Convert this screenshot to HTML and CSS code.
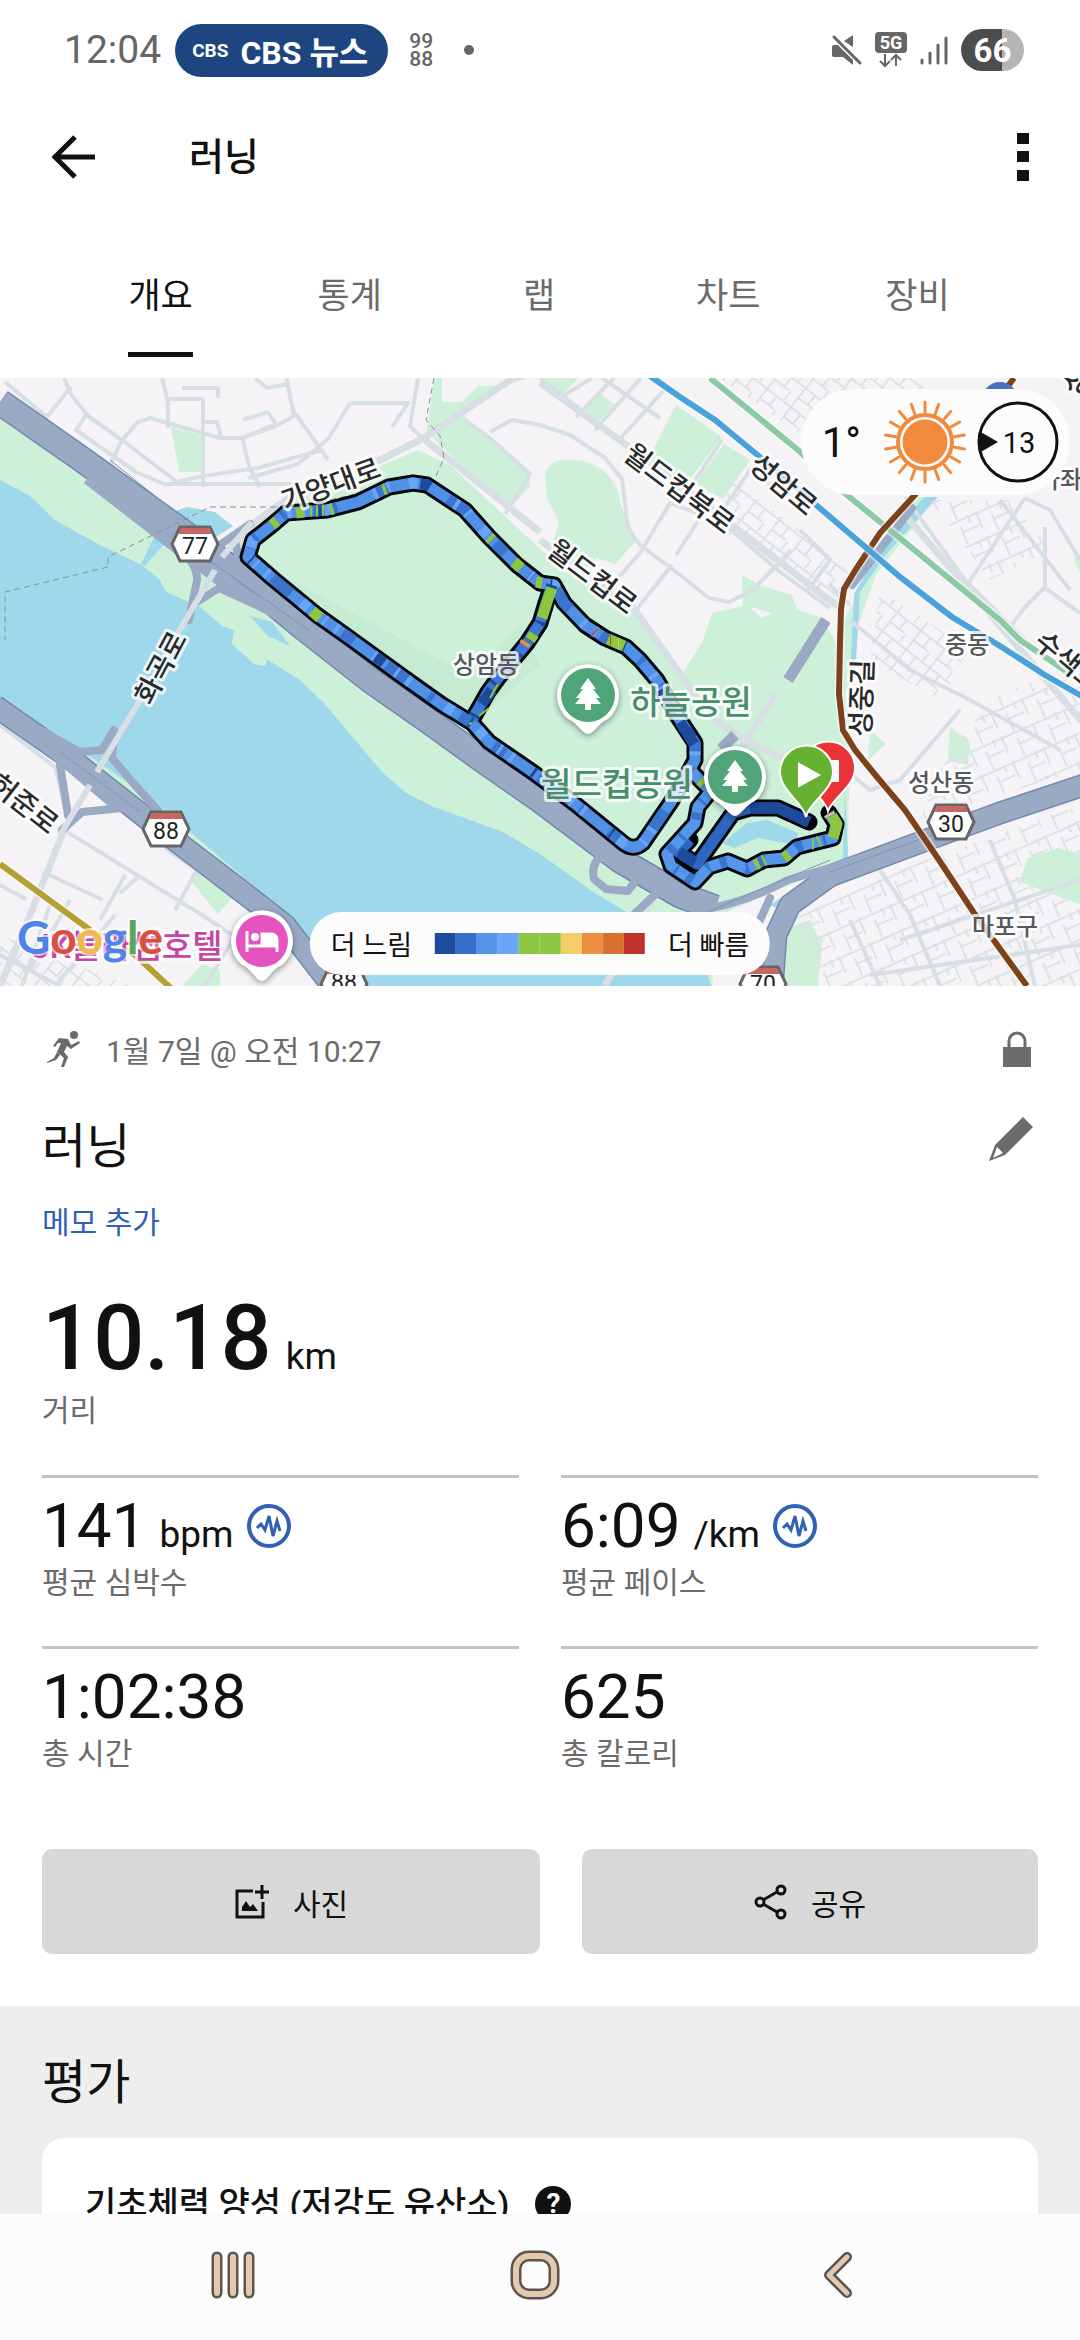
FILE: index.html
```html
<!DOCTYPE html>
<html lang="ko">
<head>
    <meta charset="UTF-8">
    <meta name="viewport" content="width=device-width, initial-scale=1.0">
    <title>러닝</title>
    <link rel="stylesheet" href="styles.css">
</head>
<body>
<div class="screen">
    <div class="status-bar">
        <span class="clock">12:04</span>
        <span class="news-pill"><small>CBS</small> CBS 뉴스</span>
        <span class="steps">99<br>88</span>
        <span class="dot"></span>
        <div class="status-icons">
            <svg width="32" height="34" viewBox="0 0 32 34" fill="#666">
                <path d="M22 2v12L13 8zM1 14q0-2 2-2h5l14 14v6l-10-8H3q-2 0-2-2z"/>
                <path d="M3 4l26 26" stroke="#fff" stroke-width="6"/>
                <path d="M3 4l26 26" stroke="#666" stroke-width="3" stroke-linecap="round"/>
            </svg>
            <svg width="32" height="36" viewBox="0 0 32 36">
                <rect width="32" height="21" rx="4" fill="#666"/>
                <text x="16" y="17" class="net-text">5G</text>
                <path d="M10 22v12m-5-5l5 5 5-5M21 34V23m-5 5l5-5 5 5" fill="none" stroke="#666" stroke-width="2"/>
            </svg>
            <svg width="30" height="32" viewBox="0 0 30 32" stroke="#666" stroke-width="3" stroke-linecap="round">
                <path d="M3 26v3M11 19v10M19 11v18M27 4v25"/>
            </svg>
            <span class="battery">66</span>
        </div>
    </div>

    <header class="app-bar">
        <button class="icon-button back" aria-label="뒤로">
            <svg width="44" height="44" viewBox="0 0 44 44" fill="none" stroke="#111" stroke-width="5"><path d="M24 2L4 22l20 20M4 22h40"/></svg>
        </button>
        <h1>러닝</h1>
        <button class="icon-button" aria-label="더보기">
            <svg width="12" height="48" viewBox="0 0 12 48" fill="#111"><path d="M0 0h12v11H0zM0 18h12v11H0zM0 37h12v11H0z"/></svg>
        </button>
    </header>

    <nav class="tabs">
        <a href="#" class="active"><span>개요</span></a>
        <a href="#"><span>통계</span></a>
        <a href="#"><span>랩</span></a>
        <a href="#"><span>차트</span></a>
        <a href="#"><span>장비</span></a>
    </nav>

    <main>
        <div class="map">
            <svg class="map-canvas" viewBox="0 378 1080 608">
                <defs>
                    <pattern id="streets" width="34" height="27" patternUnits="userSpaceOnUse" patternTransform="rotate(-24)">
                        <path d="M0 2h34M3 0v18M17 8v19M17 14h17M28 0v8" class="lane"/>
                    </pattern>
                    <pattern id="alleys" width="30" height="24" patternUnits="userSpaceOnUse" patternTransform="rotate(38)">
                        <path d="M0 2h30M4 0v24M16 2v12M4 14h18M24 14v10" class="lane"/>
                    </pattern>
                    <g id="shield">
                        <path d="M-15-17h30l8 17-8 17h-30l-8-17z" fill="#fff" stroke="#666" stroke-width="3"/>
                        <path d="M-14-16h28l3 6h-34z" fill="#c96663"/>
                    </g>
                    <g id="pin">
                        <path d="M0 39C-6 39-9 29-20 24A31 31 0 1 1 20 24C9 29 6 39 0 39z" fill="#fff" class="pin-body"/>
                        <circle r="27" fill="#4fa577"/>
                        <path d="M0-17l8 11H5l7 9H8l5 6H3v6h-6v-6h-10l5-6h-4l7-9h-3z" fill="#fff"/>
                    </g>
                    <path id="loop" d="M472 723L441 704 403 677 348 637 317 615 272 578 248 557 253 540 272 525 286 513 327 510 358 502 389 487 413 483 427 485 465 510 489 537 517 565 540 583 554 585 564 603 585 625 605 638 626 647 640 660 657 680 678 717 695 743 695 760 688 773 671 802 643 843Q633 852 622 842L574 803 534 773 489 742z"/>
                    <path id="link" d="M552 585L546 603 540 623 527 643 499 677 488 692 472 720"/>
                    <path id="east" d="M690 770L711 791 698 807 695 823 667 854 671 866 695 882 709 867 728 861 747 869 764 860 784 858 797 847 833 838 836 824 829 813"/>
                    <path id="start" d="M809 822L778 808 750 808 733 813 697 864 678 852 690 840"/>
                </defs>

                <rect y="378" width="1080" height="608" fill="#f5f3f5"/>

                <!-- parks -->
                <g class="park">
                    <path d="M0 408L110 485 180 535 235 555 255 520 290 500 390 462 418 450 450 465 552 560 600 590 640 615 665 655 683 672 702 643 712 613 747 605 762 618 788 607 820 617 835 640 850 720 848 860 720 915 712 986 330 986 280 910 180 842 0 720z"/>
                    <path d="M171 427l30 8v37h-22zM434 378h8v24h20l16-16h20l-72 50zM427 432l30-22 73 62v14l-22 24z"/>
                    <path d="M540 378h38l-16 17zM600 393l15 12-16 16-15-12zM676 405l46 32-42 55-32-32zM724 444l26 16-27 39-28-15z"/>
                    <path d="M545 476q4-16 18-16 28-2 44 14 12 12 14 32l16 34-22 24-18-6-10 10-10-6-28-4 10-36-12-24z"/>
                    <path d="M742 575l18 10 32 10 5 14-20 6-24-8-10 10zM1028 858l30-10 22 6v50l-60-22zM950 727l20 14-2 24-20-4zM788 928l22-8 12 26-4 40h-34zM190 880l20-18 34 22-26 30zM870 730l16 14-18 16zM182 986l20-22 18 6v16zM1074 560l6-6v18z"/>
                    <path d="M914 497h22l-60 78-18 50-4 56-14 20 4-80 20-40z"/>
                </g>
                <path d="M290 580l180 95 50-50 20 40-70 60z" fill="#c6ebd3"/>

                <!-- water -->
                <g fill="#9fd8ea">
                    <path d="M0 480L30 496 55 520 100 545 142 565 160 580 166 592 200 607 222 626 234 630 232 643 258 663 268 660 300 680 324 703 382 772 406 793 434 807 503 832 540 854 595 893 640 920 700 950 711 986H330L280 910 235 870 150 798 95 760 0 700z"/>
                    <path d="M165 515l22-8 28 5 18 14-22 14-40-4-26 30-4-2z"/>
                    <path d="M722 843L747 823 767 820 798 833 795 845 758 838 734 848zM770 905l40-26-8 14-24 16z"/>
                    <path d="M938 497l-50 55-28 40-5 86h-5l4-84 24-42 46-55z"/>
                    <path d="M845 790l3 70h-5z"/>
                </g>
                <path d="M248 618l20 8 24 24-26-12zM236 628l30 20v18l-12-2-22-20z" fill="#cdf0d9"/>
                <path d="M250 616l22 6 18 24-22-10z" fill="#9fd8ea"/>

                <!-- dense streets -->
                <path d="M790 920L905 868 1080 805V986H822z" fill="url(#streets)"/>
                <path d="M990 700l90-40v110l-160 50 20-50z" fill="url(#streets)"/>
                <path d="M880 590l90 60-30 50-70-40z" fill="url(#alleys)"/>
                <path d="M730 480l70 50 60 50-20 20-120-70z" fill="url(#alleys)"/>
                <path d="M930 500h80l40 50-60 30z" fill="url(#streets)"/>
                <path d="M720 378h190l60 40v30h-150z" fill="url(#alleys)"/>
                <path d="M0 935l130 51H0z" fill="url(#alleys)"/>
                <path d="M1028 858l30-10 22 6v50l-60-22z" class="park"/>

                <!-- local roads -->
                <g class="road">
                    <path d="M64 378l8 18 16 20 34 24 55 42 26-6 55-8 35-10 30-8M5 382l42 35 24-30M88 412l-12 18 60 42 28 12h130M104 478l18-38 16-18 12-4 70 20h22l34-12 18-10-8-40M162 378l6 24v26M168 399h36M203 399v88M242 437l8 32 10 18M294 412l16 22 18 26M350 403l-22 36-30 25-50 14M350 403h60M408 403l-16 24M418 378l-8 48 14 14"/>
                    <path d="M205 422h12l4 15M243 420l25-8 8 12-34 14M182 388h36v10M255 378l12 10 22-4"/>
                    <path d="M465 420l25 18 40 36-25 40M490 432l22-12 28 5"/>
                    <path d="M540 378l80 62 55 42 105 90 50 36M576 417l38-39M595 430l46-52M617 442l50-55M560 398l32-20M602 378l58 40M540 425l30 10 34 22 18 22 6 50 12 16 35 26 34 27 20 4 24-12 38-40M676 555l26-40-32-12-30 50-28 32M716 520l34-50 50 37M672 565l-40 50M722 440l-40 60M800 530l30 30-22 30M830 585l20 20M1080 560l-30-50-25-12M1025 498l-60 90M1045 527v60l-20 20-15 20M1045 588l35 25M1000 500l70 90M905 497l60 83 60 60"/>
                    <path d="M850 620l60 50 60 30 90 50M960 710l-60 70-30 10-30-25"/>
                    <path d="M0 725l55 42 8 32M64 830l138 85 30 20M125 875l-25 45M43 872l60 28M120 893l20-18M175 910l22-40-32-22M0 885l26 14M50 905l-28 81M115 915l-60 71M205 986l30-50M0 955l60 31M70 900l-40 70"/>
                    <path d="M880 870l30 45 30 71M850 920l30 66M900 940l180-60M870 975l210-30M990 840l25 60 20 86"/>
                </g>
                <g class="road wide">
                    <path d="M540 383l95 68 45 34 65 50 80 62 15 10M540 540l95 70 60 85 20 15"/>
                    <path d="M540 371l-28 8-90 60-40 20-20 8M300 490l-45 32-32 42M420 436l120 96"/>
                    <path d="M64 830l-40 100-24 56M775 695l-70 110-100 181M700 710l45 30 45 22M654 870l50 34"/>
                    <path d="M905 515l180 210"/>
                </g>

                <!-- expressways -->
                <g class="highway-edge">
                    <path d="M0 402L80 458 180 530 240 575 300 625 370 680 430 722 480 758 540 800 620 860 680 895 715 908"/>
                    <path d="M-5 706L75 762 155 825 240 890 285 925 332 986" class="h-mid"/>
                    <path d="M1090 783L1000 813 940 835 830 876 790 905 776 935 772 990" class="h-mid"/>
                </g>
                <g class="highway">
                    <path d="M0 402L80 458 180 530 240 575 300 625 370 680 430 722 480 758 540 800 620 860 680 895 715 908"/>
                    <path d="M-5 706L75 762 155 825 240 890 285 925 332 986" class="h-mid"/>
                    <path d="M1090 783L1000 813 940 835 830 876 790 905 776 935 772 990" class="h-mid"/>
                    <path d="M90 475L180 545 240 590 310 625M40 735l80 68" class="h-mid"/>
                    <path d="M700 910Q740 905 788 880L830 868 940 832M760 920l10-22M620 858l-15-4q-15 8-11 25l12 10 22 2 12-16M640 880l20 10-32 30" class="h-thin"/>
                    <path d="M170 540q28 22 27 40l-8 40M197 602l22-14 40 18 30 16M250 524l-40 28M236 545l5 25M40 730l40 22 22-2 12-20-2 28 22 26 45 50M60 765l8 50M62 830l20-18 40-4M320 645l10 8M370 680l14 18M415 720h15M540 800l50 40" class="h-thin"/>
                    <path d="M735 735l-14 14M826 620l-38 60" class="h-strip"/>
                    <path d="M912 508l-60 77" class="h-thin"/>
                </g>
                <path d="M110 460l60 48M180 538l80 60M230 575l80 56M60 752l80 60M700 915l130-55M830 872l110-40" class="hw-line"/>
                <path d="M252 522l-30 35M215 570l-40 68M140 700l-43 72M90 785l-30 50" class="road bridge"/>

                <path d="M434 378l-8 42 14 16 4 22-8 18M286 507h-76l-102 50v10L5 592v48M434 480l-60 10-76 17" class="border"/>

                <!-- rail lines -->
                <path d="M0 864l90 66 45 25 38 35" class="rail" stroke="#b5a035"/>
                <path d="M710 378L798 450 847 495 1000 620 1020 640 1085 684" class="rail" stroke="#8cc9a4"/>
                <path d="M1014 378l-30 40-71 79-33 36-24 36-12 20-3 20-1 35-1 50 4 36 12 20 22 27 28 33 34 50 35 53 53 73" class="rail" stroke="#7c421b"/>
                <path d="M650 376L680 397 715 420 760 457 863 545 900 577 952 617 1000 646 1045 675 1085 698" class="rail" stroke="#4ba2da"/>
                <circle cx="1000" cy="400" r="18" fill="#4a72c0"/>

                <!-- recorded track, coloured by pace -->
                <g class="track-shadow">
                    <use href="#loop"/><use href="#link"/><use href="#start"/><use href="#east"/>
                </g>
                <g class="track">
                    <use href="#loop" stroke="#5090e6"/>
                    <use href="#link" stroke="#3d78d2"/>
                    <use href="#start" stroke="#2f66bf"/>
                    <use href="#east" stroke="#5595ea"/>
                    <use href="#loop" stroke="#3a74cc" stroke-dasharray="14 32 5 28 24 41"/>
                    <use href="#loop" stroke="#68a5f6" stroke-dasharray="3 19 9 43 4 11"/>
                    <use href="#loop" stroke="#1d4a9a" stroke-dasharray="3 104 10 157 2 96"/>
                    <use href="#link" stroke="#1d4a9a" stroke-dasharray="3 16"/>
                    <use href="#east" stroke="#3a74cc" stroke-dasharray="3 11 7 21"/>
                    <path d="M809 822L778 808 750 808" stroke="#1d4a9a"/>
                    <path d="M695 862l-16-10M680 722l14 22M660 690l14 24M492 690l-10 14" stroke="#1d4a9a"/>
                    <path d="M312 611l8 7M272 525l5-4M296 513l8-1M310 511l2 0M316 511l2 0M322 510l2 0M330 510l3-1M383 490l3-1M489 537l3 3M514 562l7 6M552 588l-5 14-5 16M530 640l4-6M608 639l16 7M700 780l4 4M833 838l4-14-5-8M818 842l2-1M812 844l2 0M784 858l5-4M755 865l4-2M763 861l2-1M536 582l6 1" stroke="#8dc63f"/>
                    <path d="M479 716l10-8M472 723l-3 1M498 684l-8 14" stroke="#8dc63f" class="thin"/>
                    <path d="M594 632l1 1M610 640l1 0" stroke="#c03a3a"/>
                    <path d="M524 645l2-3" stroke="#ea9040"/>
                    <path d="M618 644l1 0M829 814l1 2" stroke="#e8c25a"/>
                </g>

                <!-- road labels -->
                <g class="label">
                    <text transform="translate(331 485) rotate(-20)">가양대로</text>
                    <text transform="translate(161 668) rotate(-62)">화곡로</text>
                    <text transform="translate(679 489) rotate(37)">월드컵북로</text>
                    <text transform="translate(783 485) rotate(40)">성암로</text>
                    <text transform="translate(592 577) rotate(37)">월드컵로</text>
                    <text transform="translate(862 698) rotate(-88)">성중길</text>
                    <text transform="translate(24 804) rotate(38)">허준로</text>
                    <text transform="translate(1068 662) rotate(40)">수색로</text>
                    <text transform="translate(1077 382) rotate(-50)">성</text>
                </g>
                <g class="label district">
                    <text x="486" y="665">상암동</text>
                    <text x="967" y="645">중동</text>
                    <text x="941" y="783">성산동</text>
                    <text x="1005" y="927">마포구</text>
                    <text x="1060" y="480">가좌</text>
                </g>
                <g class="label park-name">
                    <text x="691" y="702">하늘공원</text>
                    <text x="617" y="784">월드컵공원</text>
                </g>
                <text x="127" y="946" class="label hotel">JK블라썸호텔</text>

                <use href="#shield" x="195" y="544"/><text x="195" y="546" class="route-no">77</text>
                <use href="#shield" x="166" y="829"/><text x="166" y="831" class="route-no">88</text>
                <use href="#shield" x="951" y="822"/><text x="951" y="824" class="route-no">30</text>
                <use href="#shield" x="344" y="984"/><text x="344" y="982" class="route-no">88</text>
                <use href="#shield" x="763" y="984"/><text x="763" y="984" class="route-no">70</text>

                <use href="#pin" x="588" y="695"/>
                <use href="#pin" x="735" y="777"/>
                <g transform="translate(262 941)">
                    <path d="M0 40C-6 40-9 29-20 24A31 31 0 1 1 20 24C9 29 6 40 0 40z" fill="#fff" class="pin-body"/>
                    <circle r="26" fill="#e553c0"/>
                    <path d="M-15-10v21M-15 5h30M15 11V-1q0-5-5-6H0V5" fill="none" stroke="#fff" stroke-width="3"/>
                    <path d="M0-7h10q5 1 5 6v6H0z" fill="#fff"/><circle cx="-7" cy="-4" r="4" fill="#fff"/>
                </g>

                <!-- finish and start -->
                <g stroke="#fff" stroke-width="2">
                    <path d="M828 811c-3-14-26-24-26-43a26 26 0 0 1 53 0c0 19-22 29-27 43z" fill="#ea3338"/>
                    <path d="M826 761h12v20h-12z" fill="#fff"/>
                    <path d="M806 817c-3-15-26-26-26-45a26 26 0 0 1 53 0c0 19-24 30-27 45z" fill="#67b132"/>
                    <path d="M799 764v22l20-11z" fill="#fff"/>
                </g>

                <text x="17" y="954" class="google"><tspan fill="#4f83ea">G</tspan><tspan fill="#d8503f">o</tspan><tspan fill="#f0bb42">o</tspan><tspan fill="#4f83ea">g</tspan><tspan fill="#57a65c">l</tspan><tspan fill="#d8503f">e</tspan></text>
            </svg>

            <div class="weather">
                <span>1°</span>
                <svg width="84" height="84" viewBox="-42 -42 84 84" fill="none" stroke="#f08a3c">
                    <path id="ray" d="M0-30v-10M0 30v10" stroke-width="3" stroke-linecap="round"/>
                    <use href="#ray" transform="rotate(20)"/><use href="#ray" transform="rotate(40)"/><use href="#ray" transform="rotate(60)"/>
                    <use href="#ray" transform="rotate(80)"/><use href="#ray" transform="rotate(100)"/><use href="#ray" transform="rotate(120)"/>
                    <use href="#ray" transform="rotate(140)"/><use href="#ray" transform="rotate(160)"/>
                    <circle r="27" stroke-width="4"/>
                    <circle r="22" fill="#f08a3c"/>
                </svg>
                <svg width="82" height="82" viewBox="-41 -41 82 82">
                    <circle r="39" fill="none" stroke="#111" stroke-width="3"/>
                    <path d="M-39-11L-20 0l-19 11z" fill="#111"/>
                    <text x="1" y="11" class="wind">13</text>
                </svg>
            </div>

            <div class="legend">
                <span>더 느림</span>
                <div class="scale">
                    <i class="c1"></i><i class="c2"></i><i class="c3"></i><i class="c4"></i><i class="c5"></i><i class="c5"></i><i class="c6"></i><i class="c7"></i><i class="c8"></i><i class="c9"></i>
                </div>
                <span>더 빠름</span>
            </div>
        </div>

        <section class="summary">
            <div class="date-row">
                <svg width="34" height="36" viewBox="0 0 34 36" fill="#6b6b6b">
                    <circle cx="27" cy="4" r="4"/>
                    <path d="M12 7l9 1 3 6 8-4 1 2-9 6-4-3-3 6 4 5-4 10h-3l3-9-7-6 4-9-3 0-3 4-2-1z"/>
                    <path d="M10 21l3 3-4 5-9 3v-1l7-4z"/>
                </svg>
                <span>1월 7일 @ 오전 10:27</span>
                <svg class="lock" width="28" height="36" viewBox="0 0 28 36" fill="#6b6b6b">
                    <path d="M0 16h28v20H0z"/><path d="M6 17V10a8 8 0 0 1 16 0v7" fill="none" stroke="#6b6b6b" stroke-width="3"/>
                </svg>
            </div>
            <div class="title-row">
                <h2>러닝</h2>
                <button class="icon-button" aria-label="편집">
                    <svg width="44" height="44" viewBox="0 0 44 44"><path d="M34 0l10 10-28 28-16 6 6-16z" fill="#6b6b6b"/><path d="M8 30l6 6-10 5z" fill="#fff"/></svg>
                </button>
            </div>
            <a href="#" class="memo">메모 추가</a>

            <div class="distance"><strong>10.18</strong> <span>km</span></div>
            <div class="caption">거리</div>

            <div class="stats">
                <div class="stat">
                    <div class="value">141 <span>bpm</span>
                        <button class="icon-button" aria-label="심박수 차트"><svg width="44" height="44" viewBox="0 0 44 44"><use href="#pulse"/></svg></button>
                    </div>
                    <div class="caption">평균 심박수</div>
                </div>
                <div class="stat">
                    <div class="value">6:09 <span>/km</span>
                        <button class="icon-button" aria-label="페이스 차트"><svg width="44" height="44" viewBox="0 0 44 44">
                            <g id="pulse" fill="none" stroke="#2f62b5"><circle cx="22" cy="22" r="20" stroke-width="4"/><path d="M10 24l4-4 4 6 4-14 4 20 4-15 3 10" stroke-width="3"/></g>
                        </svg></button>
                    </div>
                    <div class="caption">평균 페이스</div>
                </div>
                <div class="stat">
                    <div class="value">1:02:38</div>
                    <div class="caption">총 시간</div>
                </div>
                <div class="stat">
                    <div class="value">625</div>
                    <div class="caption">총 칼로리</div>
                </div>
            </div>

            <div class="actions">
                <button class="photo">
                    <svg width="36" height="36" viewBox="0 0 36 36" fill="none" stroke="#111" stroke-width="3">
                        <path d="M19 7H3v26h26V18M28 1v14M21 8h14"/><path d="M8 27v-4l4-6 4 6 3-3 5 7z" fill="#111" stroke="none"/>
                    </svg>
                    사진
                </button>
                <button class="share">
                    <svg width="34" height="36" viewBox="0 0 34 36" fill="none" stroke="#111" stroke-width="3">
                        <circle cx="6" cy="18" r="4"/><circle cx="27" cy="6" r="4"/><circle cx="27" cy="30" r="4"/><path d="M9 16L23 8M9 20l14 8"/>
                    </svg>
                    공유
                </button>
            </div>
        </section>

        <section class="evaluation">
            <h2>평가</h2>
            <div class="card">
                <h3>기초체력 양성 (저강도 유산소)</h3>
                <button class="help" aria-label="도움말">?</button>
            </div>
        </section>
    </main>

    <footer class="nav-bar">
        <button aria-label="최근 앱">
            <svg width="46" height="48" viewBox="0 0 46 48" stroke-linecap="round">
                <path d="M7 6v36M23 6v36M39 6v36" stroke="#5c5450" stroke-width="11"/><path d="M7 6v36M23 6v36M39 6v36" stroke="#e3c9ae" stroke-width="6"/>
            </svg>
        </button>
        <button aria-label="홈">
            <svg width="50" height="50" viewBox="0 0 50 50" fill="none">
                <rect x="6" y="6" width="38" height="38" rx="13" stroke="#5c5450" stroke-width="11"/><rect x="6" y="6" width="38" height="38" rx="13" stroke="#e3c9ae" stroke-width="6"/>
            </svg>
        </button>
        <button aria-label="뒤로">
            <svg width="32" height="48" viewBox="0 0 32 48" fill="none" stroke-linecap="round" stroke-linejoin="round">
                <path d="M25 6L7 24l18 18" stroke="#5c5450" stroke-width="10"/><path d="M25 6L7 24l18 18" stroke="#e3c9ae" stroke-width="5"/>
            </svg>
        </button>
    </footer>
</div>
</body>
</html>
```
FILE: styles.css
```css
* {
    box-sizing: border-box;
}
body {
    margin: 0;
    font-family: Roboto, "Noto Sans CJK KR", sans-serif;
    color: #111;
    background-color: #fff;
}
h1, h2, h3 {
    margin: 0;
}
a {
    text-decoration: none;
}
button {
    font-family: inherit;
    color: inherit;
    border: 0;
    padding: 0;
    background: none;
    cursor: pointer;
}
svg {
    display: block;
    flex: none;
}
.screen {
    height: 100vh;
    display: flex;
    flex-direction: column;
    overflow: hidden;
}

/* status bar */
.status-bar {
    flex: none;
    height: 100px;
    padding: 0 56px 0 64px;
    display: flex;
    align-items: center;
    color: #666;
}
.clock {
    font-size: 39px;
}
.news-pill {
    height: 53px;
    margin-left: 14px;
    padding: 0 20px 0 17px;
    display: flex;
    align-items: center;
    gap: 12px;
    border-radius: 27px;
    background-color: #1d4680;
    color: #fff;
    font-size: 32px;
    font-weight: bold;
}
.news-pill small {
    font-size: 19px;
}
.steps {
    margin: 0 31px 0 21px;
    font-size: 21px;
    font-weight: 500;
    line-height: 18px;
}
.dot {
    width: 10px;
    height: 10px;
    border-radius: 50%;
    background-color: #666;
}
.status-icons {
    margin-left: auto;
    display: flex;
    align-items: center;
    gap: 12px;
}
.net-text {
    font-size: 18px;
    font-weight: bold;
    text-anchor: middle;
    fill: #fff;
}
.battery {
    width: 63px;
    height: 42px;
    border-radius: 21px;
    background: linear-gradient(90deg, #4d4d4d 65%, #b5b5b5 65%);
    color: #fff;
    font-size: 33px;
    font-weight: bold;
    line-height: 44px;
    text-align: center;
}

/* app bar and tabs */
.app-bar {
    flex: none;
    height: 114px;
    padding: 0 51px;
    display: flex;
    align-items: center;
}
.app-bar h1 {
    flex: 1;
    margin-left: 94px;
    font-size: 38px;
    font-weight: 500;
    line-height: 48px;
}
.tabs {
    flex: none;
    height: 164px;
    padding: 63px 68px 21px 66px;
    display: flex;
}
.tabs a {
    flex: 1;
    display: flex;
    justify-content: center;
    color: #6b6b6b;
    font-size: 35px;
    line-height: 40px;
}
.tabs span {
    border-bottom: 5px solid transparent;
}
.tabs .active {
    color: #111;
}
.tabs .active span {
    border-color: #111;
}
main {
    flex: 1;
    min-height: 0;
    overflow: hidden;
}

/* map */
.map {
    position: relative;
    overflow: hidden;
}
.map-canvas {
    width: 100%;
    height: auto;
}
.park {
    fill: #cdf0d9;
}
.road, .lane, .highway, .highway-edge, .rail, .border, .hw-line, .track, .track-shadow {
    fill: none;
}
.lane {
    stroke: #dde2e7;
    stroke-width: 2;
}
.road {
    stroke: #d8dfe4;
    stroke-width: 4;
    stroke-linejoin: round;
}
.wide {
    stroke-width: 7;
}
.bridge {
    stroke-width: 6;
}
.highway, .highway-edge {
    stroke: #9aaac5;
    stroke-width: 24;
    stroke-linejoin: round;
}
.highway-edge {
    stroke: #7189ae;
    stroke-width: 27;
}
.highway .h-mid {
    stroke-width: 20;
}
.highway-edge .h-mid {
    stroke-width: 23;
}
.highway .h-thin {
    stroke-width: 8;
    stroke-linecap: round;
}
.highway .h-strip {
    stroke-width: 11;
}
.hw-line {
    stroke: #7f93b6;
    stroke-width: 1;
}
.border {
    stroke: #8a9096;
    stroke-width: 1;
    stroke-dasharray: 6 4;
}
.rail {
    stroke-width: 6;
    filter: drop-shadow(0 0 1px #fff) drop-shadow(0 0 1px #fff);
}
.track-shadow {
    stroke: #05070c;
    stroke-width: 17;
    stroke-linejoin: round;
    stroke-linecap: round;
}
.track {
    stroke-width: 11;
    stroke-linejoin: round;
}
.track .thin {
    stroke-width: 2;
}
.label {
    font-size: 28px;
    font-weight: 500;
    fill: #2a2a2a;
    stroke: rgba(255, 255, 255, 0.8);
    stroke-width: 6;
    stroke-linejoin: round;
    paint-order: stroke;
    text-anchor: middle;
    dominant-baseline: central;
}
.district {
    font-size: 24px;
    fill: #55585c;
}
.park-name {
    font-size: 33px;
    fill: #478e6c;
}
.hotel {
    font-size: 33px;
    fill: #c445a6;
}
.route-no {
    font-size: 23px;
    fill: #222;
    text-anchor: middle;
    dominant-baseline: central;
}
.pin-body {
    filter: drop-shadow(0 2px 3px rgba(0, 0, 0, 0.4));
}
.google {
    font-family: Lato, sans-serif;
    font-size: 46px;
    font-weight: bold;
    stroke: rgba(255, 255, 255, 0.6);
    stroke-width: 4;
    paint-order: stroke;
}
.weather {
    position: absolute;
    top: 11px;
    right: 10px;
    height: 106px;
    padding: 0 11px 0 21px;
    display: flex;
    align-items: center;
    border-radius: 53px;
    background-color: #fcfcfc;
    font-size: 42px;
}
.weather svg {
    margin-left: 10px;
}
.weather span {
    margin-right: 12px;
}
.wind {
    font-size: 29px;
    text-anchor: middle;
    fill: #111;
}
.legend {
    position: absolute;
    left: 50%;
    bottom: 11px;
    transform: translateX(-50%);
    height: 63px;
    padding: 0 21px;
    display: flex;
    align-items: center;
    gap: 23px;
    border-radius: 32px;
    background-color: #fcfcfc;
    font-size: 27px;
    white-space: nowrap;
}
.scale {
    display: flex;
}
.scale i {
    width: 21px;
    height: 21px;
}
.c1 { background-color: #1d4a9a; }
.c2 { background-color: #3570cc; }
.c3 { background-color: #5495ea; }
.c4 { background-color: #68a7f8; }
.c5 { background-color: #8ec743; }
.c6 { background-color: #f5ce67; }
.c7 { background-color: #ea9040; }
.c8 { background-color: #da702f; }
.c9 { background-color: #c0332c; }

/* activity summary */
.summary {
    padding: 43px 42px 52px;
}
.date-row {
    height: 40px;
    padding: 0 7px 0 5px;
    display: flex;
    align-items: center;
    gap: 25px;
    font-size: 30px;
    color: #6b6b6b;
}
.lock {
    margin-left: auto;
}
.title-row {
    margin-top: 48px;
    padding-right: 5px;
    display: flex;
    justify-content: space-between;
    align-items: flex-start;
}
h2 {
    font-size: 48px;
    font-weight: 400;
    line-height: 60px;
}
.memo {
    display: block;
    margin-top: 26px;
    font-size: 30px;
    line-height: 40px;
    color: #2f62b5;
}
.distance {
    height: 100px;
    margin-top: 46px;
    display: flex;
    align-items: baseline;
    gap: 14px;
    font-size: 37px;
    line-height: 100px;
}
.distance strong {
    font-size: 90px;
    font-weight: 500;
}
.caption {
    margin-top: 2px;
    font-size: 30px;
    line-height: 40px;
    color: #6b6b6b;
}
.stats {
    margin-top: 44px;
    display: grid;
    grid-template-columns: 1fr 1fr;
    gap: 43px 42px;
}
.stat {
    padding-top: 13px;
    border-top: 3px solid #c3c3c3;
}
.value {
    display: flex;
    align-items: baseline;
    gap: 13px;
    height: 70px;
    font-size: 62px;
    line-height: 70px;
}
.value span {
    font-size: 37px;
}
.value .icon-button {
    align-self: center;
}
.actions {
    margin-top: 75px;
    display: flex;
    gap: 42px;
}
.actions button {
    height: 105px;
    display: flex;
    align-items: center;
    justify-content: center;
    gap: 23px;
    border-radius: 10px;
    background-color: #d8d8d8;
    font-size: 30px;
}
.photo {
    flex: 498;
}
.share {
    flex: 456;
}

/* evaluation */
.evaluation {
    padding: 47px 42px;
    background-color: #eee;
}
.card {
    margin-top: 25px;
    padding: 46px 43px;
    display: flex;
    align-items: center;
    gap: 26px;
    border-radius: 22px;
    background-color: #fff;
}
.card h3 {
    font-size: 34px;
    font-weight: 500;
    line-height: 40px;
}
.help {
    width: 36px;
    height: 36px;
    border-radius: 50%;
    background-color: #111;
    color: #fff;
    font-size: 28px;
    font-weight: bold;
    line-height: 36px;
}

/* system navigation */
.nav-bar {
    flex: none;
    height: 126px;
    padding: 0 91px 4px 82px;
    display: flex;
    background-color: #fcfcfc;
}
.nav-bar button {
    flex: 1;
    display: flex;
    align-items: center;
    justify-content: center;
}
```
